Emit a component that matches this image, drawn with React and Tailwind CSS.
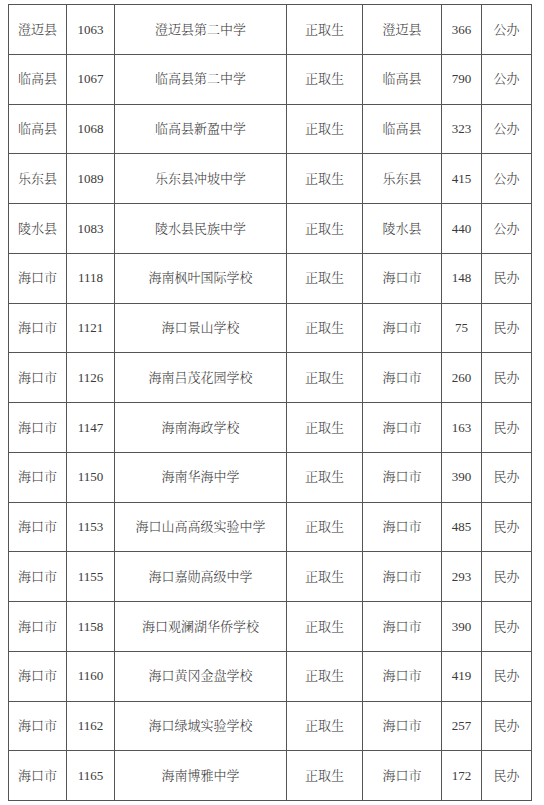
import React from "react";

const rows = [
  ["澄迈县", "1063", "澄迈县第二中学", "正取生", "澄迈县", "366", "公办"],
  ["临高县", "1067", "临高县第二中学", "正取生", "临高县", "790", "公办"],
  ["临高县", "1068", "临高县新盈中学", "正取生", "临高县", "323", "公办"],
  ["乐东县", "1089", "乐东县冲坡中学", "正取生", "乐东县", "415", "公办"],
  ["陵水县", "1083", "陵水县民族中学", "正取生", "陵水县", "440", "公办"],
  ["海口市", "1118", "海南枫叶国际学校", "正取生", "海口市", "148", "民办"],
  ["海口市", "1121", "海口景山学校", "正取生", "海口市", "75", "民办"],
  ["海口市", "1126", "海南吕茂花园学校", "正取生", "海口市", "260", "民办"],
  ["海口市", "1147", "海南海政学校", "正取生", "海口市", "163", "民办"],
  ["海口市", "1150", "海南华海中学", "正取生", "海口市", "390", "民办"],
  ["海口市", "1153", "海口山高高级实验中学", "正取生", "海口市", "485", "民办"],
  ["海口市", "1155", "海口嘉勋高级中学", "正取生", "海口市", "293", "民办"],
  ["海口市", "1158", "海口观澜湖华侨学校", "正取生", "海口市", "390", "民办"],
  ["海口市", "1160", "海口黄冈金盘学校", "正取生", "海口市", "419", "民办"],
  ["海口市", "1162", "海口绿城实验学校", "正取生", "海口市", "257", "民办"],
  ["海口市", "1165", "海南博雅中学", "正取生", "海口市", "172", "民办"],
];

const widths = ["w-[58px]", "w-[48px]", "w-[172px]", "w-[76px]", "w-[79px]", "w-[40px]", "w-[50px]"];

const App = () => {
  return (
    <div className="w-[544px] h-[805px] bg-white pt-1 pl-2 overflow-hidden">
      <table
        className="w-[524px] h-[797px] table-fixed border-collapse text-[13px] text-[#3a3a3a]"
        style={{ fontFamily: '"Liberation Serif", "Noto Serif CJK SC", "Noto Sans CJK SC", serif' }}
      >
        <colgroup>
          {widths.map((w, i) => (
            <col key={i} className={w} />
          ))}
        </colgroup>
        <tbody>
          {rows.map((row, i) => (
            <tr key={i}>
              {row.map((cell, j) => (
                <td key={j} className="border border-[#555] text-center align-middle p-0 font-light">
                  {cell}
                </td>
              ))}
            </tr>
          ))}
        </tbody>
      </table>
    </div>
  );
};

export default App;
